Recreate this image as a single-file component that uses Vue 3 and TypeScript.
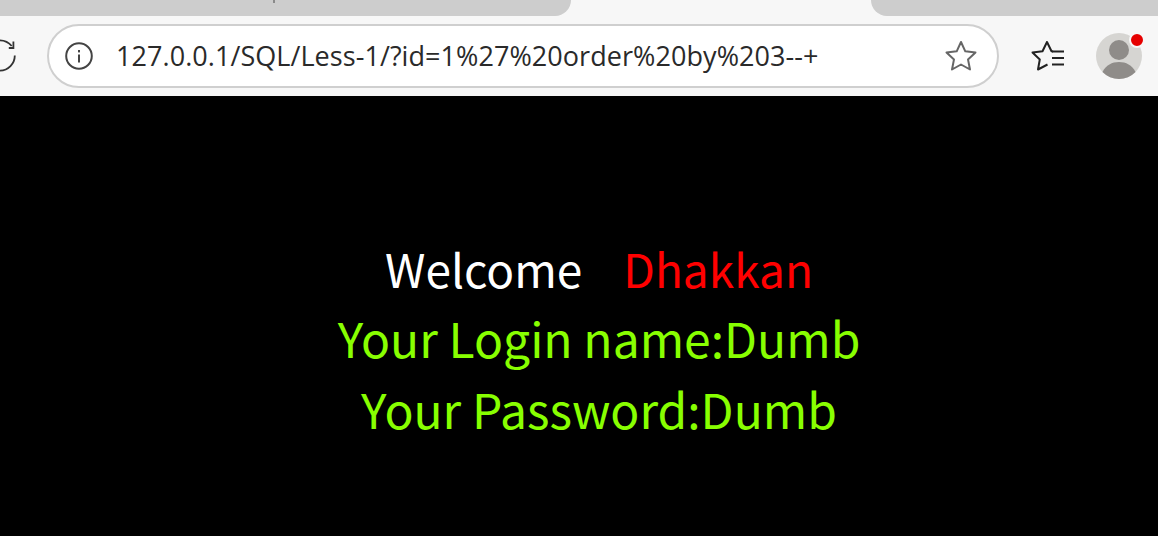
<script setup lang="ts">
const url = '127.0.0.1/SQL/Less-1/?id=1%27%20order%20by%203--+';
</script>

<template>
    <div class="page">
        <div class="browser">
            <div class="tabs">
                <div class="tab tab-left"><span class="tab-mark"></span></div>
                <div class="tab-active"></div>
                <div class="tab tab-right"></div>
            </div>
            <div class="toolbar">
                <svg class="reload" width="16" height="36" viewBox="0 0 16 36" fill="none">
                    <path d="M0 2.300 A15.200 15.200 0 0 1 11.700 8" stroke="#333" stroke-width="1.800" />
                    <path d="M14.800 17.500 A15.200 15.200 0 0 1 0 32.700" stroke="#333" stroke-width="1.800" />
                    <path d="M8.800 10 H13.400 V3.500" stroke="#333" stroke-width="1.800" />
                </svg>
                <div class="address">
                    <svg class="info" width="28" height="28" viewBox="0 0 28 28" fill="none">
                        <circle cx="14" cy="14" r="12.800" stroke="#444" stroke-width="2" />
                        <rect x="13" y="12.500" width="2" height="8" fill="#444" />
                        <rect x="13" y="8" width="2" height="2.400" fill="#444" />
                    </svg>
                    <span class="url">{{ url }}</span>
                    <svg class="star" width="34" height="32" viewBox="0 0 34 32" fill="none">
                        <path d="M17 2 L21.300 11.300 L31.500 12.500 L24 19.400 L26 29.500 L17 24.500 L8 29.500 L10 19.400 L2.500 12.500 L12.700 11.300 Z" stroke="#666" stroke-width="2" stroke-linejoin="round" />
                    </svg>
                </div>
                <svg class="favorites" width="34" height="32" viewBox="0 0 34 32" fill="none">
                    <path d="M22 11.500 L20.500 11.200 L16 2 L11.500 11.300 L1.500 12.500 L8.800 19.400 L7 29.500 L16.500 24.500" stroke="#222" stroke-width="2" stroke-linejoin="round" />
                    <path d="M21 11.500 H33 M21 18 H33 M21 24.500 H33" stroke="#222" stroke-width="2" />
                </svg>
                <div class="avatar">
                    <svg width="46" height="46" viewBox="0 0 46 46">
                        <circle cx="23" cy="23" r="23" fill="#d6d5d2" />
                        <circle cx="23" cy="17" r="10" fill="#8f8c89" />
                        <path d="M6.500 39 C10 32 16 29 23 29 C30 29 36 32 39.500 39 A23 23 0 0 1 6.500 39 Z" fill="#8f8c89" />
                    </svg>
                    <span class="badge"></span>
                </div>
            </div>
        </div>
        <div class="content">
            <div class="line first"><span class="welcome">Welcome</span><span class="name">Dhakkan</span></div>
            <div class="line green login">Your Login name:Dumb</div>
            <div class="line green">Your Password:Dumb</div>
        </div>
    </div>
</template>

<style>
    html, body {
        margin: 0;
        background: #000;
    }
</style>

<style scoped>
    .page {
        width: 1158px;
        height: 536px;
        overflow: hidden;
        display: flex;
        flex-direction: column;
        background: #000;
    }

    .browser {
        height: 96px;
        background: #f7f7f7;
        flex-shrink: 0;
    }

    .tabs {
        height: 16px;
        display: flex;
    }

    .tab {
        background: #cdcdcd;
        height: 16px;
    }

    .tab-left {
        width: 571px;
        border-bottom-right-radius: 16px;
        display: flex;
        justify-content: flex-end;
    }

    .tab-mark {
        width: 2px;
        height: 3px;
        background: #8a8a8a;
        margin-right: 296px;
    }

    .tab-active {
        width: 300px;
    }

    .tab-right {
        flex: 1;
        border-bottom-left-radius: 16px;
    }

    .toolbar {
        height: 80px;
        display: flex;
        align-items: center;
        box-sizing: border-box;
    }

    .reload {
        width: 16px;
        margin: 0 31px 0 0;
        flex-shrink: 0;
        overflow: visible;
    }

    .address {
        width: 952px;
        height: 64px;
        box-sizing: border-box;
        border: 2px solid #cfcfcf;
        border-radius: 32px;
        background: #fff;
        display: flex;
        align-items: center;
        padding: 0 19px 0 16px;
        flex-shrink: 0;
    }

    .info {
        flex-shrink: 0;
        margin-right: 23px;
    }

    .url {
        flex: 1;
        font-family: "Open Sans", sans-serif;
        font-size: 27px;
        letter-spacing: 0.06px;
        color: #2a2a2a;
        white-space: nowrap;
        padding-bottom: 2px;
    }

    .star {
        flex-shrink: 0;
    }

    .favorites {
        flex-shrink: 0;
        margin-left: 32px;
    }

    .avatar {
        position: relative;
        width: 46px;
        height: 46px;
        margin-left: 31px;
        flex-shrink: 0;
    }

    .avatar svg {
        display: block;
    }

    .badge {
        position: absolute;
        top: -1px;
        right: -3px;
        width: 12px;
        height: 12px;
        background: #e60000;
        border: 2px solid #f7f7f7;
        border-radius: 50%;
    }

    .content {
        padding-top: 139px;
        padding-left: 40px;
        display: flex;
        flex-direction: column;
        align-items: center;
        font-family: "Noto Sans CJK SC", "Noto Sans", sans-serif;
        font-size: 48px;
        line-height: 70px;
    }

    .line {
        white-space: nowrap;
    }

    .first {
        font-size: 46px;
        line-height: 67px;
    }

    .login {
        margin-bottom: 1px;
    }

    .welcome {
        color: #fff;
    }

    .name {
        color: #f00;
        margin-left: 41px;
    }

    .green {
        color: #88ff00;
    }
</style>
